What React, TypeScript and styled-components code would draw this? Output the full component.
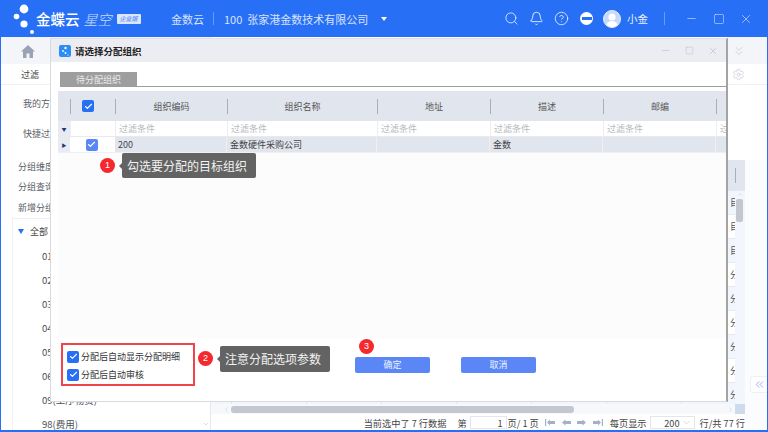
import React from "react";
import styled, { createGlobalStyle } from "styled-components";
import { Search, Bell, CircleHelp, Minus, Square, X, ChevronsDown, Settings, ChevronsLeft, ChevronDown, ChevronUp, ChevronLeft, ChevronRight, Check } from "lucide-react";

const Global = createGlobalStyle`
  html, body { margin: 0; padding: 0; width: 768px; height: 432px; overflow: hidden; background: #fff; }
  * { box-sizing: border-box; }
  body { font-family: "Noto Sans CJK SC", "Noto Sans", sans-serif; }
`;

const Page = styled.div`
  position: relative; width: 768px; height: 432px; overflow: hidden; display: flex; flex-direction: column;
  background: #fff; color: #4a4f57; font-size: 9px;
  border-left: 1px solid #2770f6; border-right: 1px solid #2770f6; border-bottom: 2px solid #2770f6;
`;
const Header = styled.header`
  flex: 0 0 37px; margin: 0 -1px; display: flex; align-items: center; background: #2770f6; color: #fff;
`;
const LogoBox = styled.div`
  flex: 0 0 171px; display: flex; align-items: center; height: 100%;
`;
const LogoMain = styled.span`
  margin-left: 1px; font-size: 14.5px; letter-spacing: 0; font-weight: 500; line-height: 1; margin-top: 1px;
`;
const LogoSub = styled.span`
  margin-left: 4px; font-size: 14px; font-style: italic; font-weight: 300; opacity: .75; line-height: 1; margin-top: 0;
`;
const LogoBadge = styled.span`
  margin-left: 5px; width: 24px; height: 10px; background: #d9e6fd; color: #2770f6; font-size: 6px; line-height: 10px; text-align: center; border-radius: 1px; font-style: italic;
`;
const HeadText = styled.span<{ $w: number }>`
  flex: 0 0 ${p => p.$w}px; font-size: 11px; opacity: .92; white-space: pre; color: #e4edfe;
`;
const HeadDivider = styled.i<{ $ml: number; $mr: number }>`
  flex: 0 0 1px; height: 13px; margin: 0 ${p => p.$mr}px 0 ${p => p.$ml}px; background: rgba(255,255,255,.3);
`;
const Caret = styled.i`
  width: 0; height: 0; margin-left: 13px; border: 3.5px solid transparent; border-top: 4px solid #fff; border-bottom: 0;
`;
const HeadRight = styled.div`
  margin-left: auto; display: flex; align-items: center; color: #eef3fe;
`;
const HeadIcon = styled.span<{ $w: number }>`
  flex: 0 0 ${p => p.$w}px; display: flex; justify-content: center; align-items: center;
`;
const NoEntry = styled.span`
  width: 13px; height: 13px; border-radius: 50%; background: #fff; display: flex; align-items: center; justify-content: center;
  &::after { content: ""; width: 10px; height: 3px; background: #2770f6; }
`;
const Avatar = styled.span`
  width: 18px; height: 18px; border-radius: 50%; background: #c6d8fb; display: block; overflow: hidden; border: 1px solid #e8effe;
`;
const UserName = styled.span`
  margin-left: 3px; width: 37px; font-size: 10.5px; color: #eaf1fe;
`;

const Body = styled.div`
  flex: 1; min-height: 0; display: flex;
`;
const LeftPanel = styled.aside`
  flex: 0 0 210px; display: flex; flex-direction: column; background: #fff; border-right: 1px solid #e6e8ee;
`;
const HomeTab = styled.div`
  flex: none; height: 27px; background: #f4f5f9; display: flex; align-items: center; justify-content: flex-start; padding: 2px 0 0 20px; color: #9aa3b5;
`;
const FilterTab = styled.div`
  flex: none; height: 21px; padding-left: 20px; line-height: 21px; color: #444; font-size: 9px; border-bottom: 1px solid #f0f1f4;
`;
const LeftLabel = styled.div<{ $x: number; $h: number; $mt: number }>`
  flex: none; height: ${p => p.$h}px; margin-top: ${p => p.$mt}px; padding-left: ${p => p.$x}px; line-height: ${p => p.$h}px; white-space: nowrap; color: #5a5f68;
`;
const TreeBox = styled.div`
  flex: 1; min-height: 0; margin: 0 0 0 11px; border-left: 1px solid #f0f1f5; border-top: 1px solid #eceef3; position: relative; overflow: hidden;
`;
const TreeRoot = styled.div`
  height: 25px; padding-left: 18px; line-height: 26px; display: flex; align-items: center; color: #444; gap: 0;
`;
const TriDown = styled.i`
  width: 0; height: 0; margin: 0 6px 0 -13px; border: 3.5px solid transparent; border-top: 5px solid #2770f6; border-bottom: 0;
`;
const TreeItem = styled.div`
  height: 24px; padding-left: 29px; line-height: 24px; white-space: nowrap; color: #4a4f57; font-size: 9.5px;
`;
const TreeArrow = styled.span`
  position: absolute; right: 0; bottom: 2px; color: #c4c8d0; display: flex;
`;

const MainPanel = styled.main`
  flex: 1; min-width: 0; display: flex; flex-direction: column; background: #fbfcfe;
`;
const MainTop = styled.div`
  flex: 0 0 123px; background: #fff;
`;
const GridArea = styled.div`
  flex: 1; min-height: 0; display: flex; overflow: hidden;
`;
const GridBody = styled.div`
  flex: 1; min-width: 0; display: flex; flex-direction: column;
`;
const GridHead = styled.div`
  flex: 0 0 31px; background: #e1e5ee;
`;
const GridRow = styled.div<{ $alt: boolean }>`
  flex: 0 0 24px; display: grid; grid-template-columns: 1fr 5px; align-items: center; color: #555;
  background: ${p => (p.$alt ? "#f1f5fd" : "#fff")}; border-bottom: 1px solid #e6e9f0;
`;
const GridFill = styled.span`
  height: 100%;
  background: repeating-linear-gradient(to right, transparent 0 20px, #e2e5ec 20px 21px, transparent 21px 75px);
`;
const CellClip = styled.span`
  overflow: hidden; white-space: nowrap; font-size: 9px; line-height: 1;
`;
const VScroll = styled.div`
  flex: 0 0 10px; background: #f3f6fc; display: flex; flex-direction: column; align-items: center; color: #c4c8d0;
`;
const HeadCap = styled.div`
  flex: 0 0 31px; width: 100%; background: #e1e5ee; display: flex; align-items: center;
  &::before { content: ""; width: 1px; height: 15px; background: #a9aeb8; }
`;
const VThumb = styled.div`
  width: 7px; height: 23px; margin-top: 1px; margin-right: 2px; background: #c3c7d0; border-radius: 2px;
`;
const BottomBar = styled.div`
  flex: 0 0 10px; display: flex; align-items: center; background: #f6f8fc; color: #c4c8d0; padding-left: 12px;
`;
const HTrack = styled.div`
  flex: 1; height: 7px; margin: 0 1px;
`;
const HThumb = styled.div`
  width: 343px; height: 7px; background: #c3c7d0; border-radius: 3px;
`;
const Corner = styled.div`
  flex: 0 0 10px; height: 10px; background: #ccdcec; margin-left: 1px;
`;
const StatusBar = styled.div`
  flex: 0 0 16px; display: flex; align-items: center; justify-content: flex-end; background: #fff; color: #444; font-size: 9.2px; white-space: pre; padding: 1px 0 0 0;
`;
const StatusCount = styled.span`
  margin-right: 11px;
`;
const PageInput = styled.span`
  width: 37px; height: 13px; border: 1px solid #e3e6ec; text-align: right; padding-right: 3px; line-height: 12px; margin: 0 1px 0 3px; background: #fff;
`;
const NavIcons = styled.span`
  display: flex; gap: 6px; margin: 0 7px 0 6px; color: #a4b0c8;
`;
const NavIcon = styled.svg`
  flex: none;
`;
const SizeSelect = styled.span`
  width: 45px; height: 13px; border: 1px solid #e3e6ec; margin: 0 5px 0 3px; display: flex; align-items: center; justify-content: flex-end; gap: 1px; padding-right: 2px; line-height: 12px;
  svg { flex: none; }
`;
const RightRail = styled.aside`
  flex: 0 0 22px; background: #fbfcfe; display: flex; flex-direction: column;
`;
const RailWhite = styled.div`
  flex: 0 0 123px; background: #fff;
`;
const CollapseBtn = styled.div`
  position: absolute; right: -1px; top: 376px; width: 18px; height: 17px; background: #fff; color: #5a87f5; border-radius: 3px 0 0 3px; display: flex; align-items: center; justify-content: center; border: 1px solid #eef0f5; border-right: 0;
`;
const OuterTools = styled.div`
  position: absolute; left: 726px; top: 37px; width: 41px; height: 48px; display: flex; flex-direction: column; background: #fff; color: #b3bac8; align-items: flex-start; border-bottom: 1px solid #f0f1f4;
`;
const OuterToolTop = styled.div`
  height: 27px; width: 100%; padding-left: 5px; background: #f4f5f9; display: flex; align-items: center;
`;
const OuterToolGear = styled.div`
  height: 20px; padding-left: 5px; display: flex; align-items: center;
`;

const Modal = styled.section`
  position: absolute; left: 49px; top: 38px; width: 678px; height: 364px; background: #fff; display: flex; flex-direction: column;
  border-left: 1px solid #d8dade; border-bottom: 1px solid #d8dade; border-right: 2px solid #a3a3a3; border-top: 1px solid #dfe1e6;
`;
const ModalTitle = styled.div`
  flex: 0 0 23px; background: #ecedf2; display: flex; align-items: center; padding-left: 8px; color: #222; font-size: 9.5px; font-weight: 700;
`;
const TitleLogo = styled.span`
  width: 12px; height: 12px; margin-right: 4px; border-radius: 2px; background: #2b8ef5; display: block;
`;
const ModalControls = styled.div`
  margin-left: auto; display: flex; align-items: center; color: #a9afbb; padding-right: 1px;
`;
const ModalControl = styled.span`
  width: 24px; display: flex; justify-content: center;
`;
const TabStrip = styled.div`
  flex: 0 0 25px; padding: 10px 0 0 9px; display: flex; margin-bottom: 4px;
`;
const TabBar = styled.div`
  flex: 1; border-bottom: 1px solid #9c9c9c; display: flex;
`;
const Tab = styled.div`
  width: 77px; height: 14px; background: #9e9e9e; color: #ececec; font-size: 9px; line-height: 15px; text-align: center;
`;
const Grid = styled.div`
  flex: 0 0 247px; margin-left: 7px; display: flex; flex-direction: column; background: #fcfcfc; overflow: hidden;
`;
const GRID_COLS = "12px 45px 112px 150px 113px 113px 113px 20px";
const HeaderRow = styled.div`
  flex: 0 0 30px; display: grid; grid-template-columns: ${GRID_COLS}; background: #e1e5ee; align-items: center; color: #555; font-size: 9px;
`;
const HeaderCell = styled.div`
  height: 15px; display: flex; align-items: center; justify-content: center; border-left: 1px solid #a9aeb8;
`;
const HeaderCheckCell = styled(HeaderCell)`
  padding-right: 10px;
`;
const FilterRow = styled.div`
  flex: 0 0 16px; display: grid; grid-template-columns: ${GRID_COLS}; background: #fff; color: #b5b8be; font-size: 9px; border-bottom: 1px solid #e8eaf0;
`;
const FilterCell = styled.div`
  padding-left: 3px; line-height: 15px; border-left: 1px solid #eceef3; overflow: hidden; white-space: nowrap;
`;
const RowMark = styled.div<{ $bg: string }>`
  display: flex; align-items: center; justify-content: center; background: ${p => p.$bg}; color: #1c3a78; font-size: 5px;
`;
const DataRow = styled.div`
  flex: 0 0 16px; display: grid; grid-template-columns: ${GRID_COLS}; background: #e1e5ee; color: #444; font-size: 9px; border-bottom: 1px solid #eef0f4;
`;
const DataCell = styled.div`
  padding: 1px 0 0 3px; line-height: 14px; border-right: 1px solid #eef0f4; white-space: nowrap; overflow: hidden;
`;
const CheckCell = styled.div`
  background: #fff; display: flex; align-items: center; justify-content: center; padding-right: 2px;
`;
const CheckBox = styled.span<{ $soft?: boolean }>`
  flex: none; width: 12px; height: 12px; border-radius: 2px; display: flex; align-items: center; justify-content: center; color: #fff;
  background: ${p => (p.$soft ? "#5a87f5" : "#2770f6")};
`;
const ModalFooter = styled.div`
  flex: 1; display: flex; align-items: flex-start; padding: 5px 0 0 10px;
`;
const OptionBox = styled.div`
  width: 134px; height: 43px; border: 2px solid #f0444a; display: flex; flex-direction: column; justify-content: center; gap: 5px; padding: 2px 0 0 4px; color: #333; font-size: 9px;
`;
const Option = styled.label`
  display: flex; align-items: center; gap: 2px; height: 13px; white-space: nowrap;
`;
const ButtonRow = styled.div`
  margin: 14px 0 0 160px; display: flex; gap: 31px;
`;
const Btn = styled.button`
  width: 75px; height: 16px; padding: 0; border: 0; border-radius: 2px; background: #5a87f5; color: #eef3fe; font: 9px "Noto Sans CJK SC", sans-serif; line-height: 16px;
`;
const Badge = styled.span<{ $x: number; $y: number }>`
  position: absolute; left: ${p => p.$x}px; top: ${p => p.$y}px; width: 15px; height: 15px; border-radius: 50%; background: #f5282d; color: #fff; font: 400 9px/15px "Liberation Sans", sans-serif; text-align: center;
`;
const Tip = styled.div<{ $x: number; $y: number; $w: number; $h: number; $fs: number }>`
  position: absolute; left: ${p => p.$x}px; top: ${p => p.$y}px; width: ${p => p.$w}px; height: ${p => p.$h}px; background: #636363; color: #f2f2f2; border-radius: 2px; font-size: ${p => p.$fs}px; line-height: ${p => p.$h}px; padding-left: 5px; white-space: nowrap;
  &::before { content: ""; position: absolute; left: -3px; top: 50%; margin-top: -3px; border: 3px solid transparent; border-left: 0; border-right-color: #636363; }
`;

const rowTexts = ["目","目","目","分","分","分","分","分","分"];
const treeItems = ["01(原材料)","02(半成品)","03(产成品)","04(周转材料)","05(设备)","06(配件)","09(工序物资)","98(费用)"];

const Nav = ({ d }: { d: string }) => (
  <NavIcon width="10" height="9" viewBox="0 0 10 9" fill="currentColor"><path d={d} /></NavIcon>
);

export default function App() {
  return (
    <Page>
      <Global />
      <Header>
        <LogoBox>
          <svg width="35" height="37" viewBox="0 0 35 37" fill="#fff" style={{ flex: "none" }}>
            <circle cx="24" cy="9" r="4.4" /><circle cx="16.5" cy="16.5" r="2.8" /><circle cx="24" cy="24" r="3.6" /><circle cx="32" cy="32" r="2" />
          </svg>
          <LogoMain>金蝶云</LogoMain>
          <LogoSub>星空</LogoSub>
          <LogoBadge>企业版</LogoBadge>
        </LogoBox>
        <HeadText $w={33}>金数云</HeadText>
        <HeadDivider $ml={9} $mr={10} />
        <HeadText $w={144}>100  张家港金数技术有限公司</HeadText>
        <Caret />
        <HeadRight>
          <HeadIcon $w={25}><Search size={15} strokeWidth={1.3} /></HeadIcon>
          <HeadIcon $w={25}><Bell size={15} strokeWidth={1.4} /></HeadIcon>
          <HeadIcon $w={25}><CircleHelp size={15} strokeWidth={1.3} /></HeadIcon>
          <HeadIcon $w={25}><NoEntry /></HeadIcon>
          <HeadIcon $w={25}>
            <Avatar>
              <svg width="16" height="16" viewBox="0 0 16 16" fill="#fff"><circle cx="8" cy="6" r="3.6" /><ellipse cx="8" cy="14.5" rx="5.5" ry="4.5" /></svg>
            </Avatar>
          </HeadIcon>
          <UserName>小金</UserName>
          <HeadDivider $ml={0} $mr={13} />
          <HeadIcon $w={27}><Minus size={13} strokeWidth={1} /></HeadIcon>
          <HeadIcon $w={27}><Square size={12} strokeWidth={1} /></HeadIcon>
          <HeadIcon $w={27}><X size={14} strokeWidth={1} /></HeadIcon>
          <HeadIcon $w={9} />
        </HeadRight>
      </Header>
      <Body>
        <LeftPanel>
          <HomeTab>
            <svg width="14" height="13" viewBox="0 0 14 13" fill="currentColor"><path d="M7 0 L14 6.5 H12 V13 H8.5 V8.5 H5.5 V13 H2 V6.5 H0 Z" /></svg>
          </HomeTab>
          <FilterTab>过滤</FilterTab>
          <LeftLabel $x={22} $h={30} $mt={4}>我的方案</LeftLabel>
          <LeftLabel $x={22} $h={30} $mt={0}>快捷过滤</LeftLabel>
          <LeftLabel $x={17} $h={20} $mt={8}>分组维度</LeftLabel>
          <LeftLabel $x={17} $h={20} $mt={0}>分组查询</LeftLabel>
          <LeftLabel $x={17} $h={20} $mt={1}>新增分组</LeftLabel>
          <TreeBox>
            <TreeRoot><TriDown />全部</TreeRoot>
            {treeItems.map(t => <TreeItem key={t}>{t}</TreeItem>)}
            <TreeArrow><ChevronDown size={8} /></TreeArrow>
          </TreeBox>
        </LeftPanel>
        <MainPanel>
          <MainTop />
          <GridArea>
            <GridBody>
              <GridHead />
              {rowTexts.map((t, i) => (
                <GridRow key={i} $alt={i % 2 === 0}>
                  <GridFill />
                  <CellClip>{t}</CellClip>
                </GridRow>
              ))}
            </GridBody>
            <VScroll>
              <HeadCap />
              <ChevronUp size={7} />
              <VThumb />
            </VScroll>
          </GridArea>
          <BottomBar>
            <ChevronLeft size={7} />
            <HTrack><HThumb /></HTrack>
            <ChevronRight size={7} />
            <Corner />
          </BottomBar>
          <StatusBar>
            <StatusCount>当前选中了 7 行数据</StatusCount>
            第<PageInput>1</PageInput>页/ 1 页
            <NavIcons>
              <Nav d="M0 1h1.2v7H0zM2 4.5 5 1.5V3H10V6H5V7.5Z" />
              <Nav d="M1 4.5 4.5 1.5V3H10V6H4.5V7.5Z" />
              <Nav d="M9 4.5 5.5 1.5V3H0V6H5.5V7.5Z" />
              <Nav d="M8.8 1H10v7H8.8zM8 4.5 5 1.5V3H0V6H5V7.5Z" />
            </NavIcons>
            每页显示
            <SizeSelect>200<ChevronDown size={11} color="#aeb2bb" strokeWidth={1} /></SizeSelect>
            行/共 77 行
          </StatusBar>
        </MainPanel>
        <RightRail>
          <RailWhite />
        </RightRail>
      </Body>

      <OuterTools>
        <OuterToolTop><ChevronsDown size={14} strokeWidth={1} /></OuterToolTop>
        <OuterToolGear><Settings size={13} strokeWidth={1} /></OuterToolGear>
      </OuterTools>
      <CollapseBtn><ChevronsLeft size={13} strokeWidth={1.2} /></CollapseBtn>

      <Modal>
        <ModalTitle>
          <TitleLogo>
            <svg width="12" height="12" viewBox="0 0 12 12" fill="#fff"><circle cx="6.5" cy="3" r="1.2" /><circle cx="4" cy="6" r=".9" /><circle cx="6.5" cy="8" r="1" /><circle cx="9" cy="10" r=".6" /></svg>
          </TitleLogo>
          请选择分配组织
          <ModalControls>
            <ModalControl><Minus size={11} strokeWidth={1} /></ModalControl>
            <ModalControl><Square size={9} strokeWidth={1} /></ModalControl>
            <ModalControl><X size={12} strokeWidth={1} /></ModalControl>
          </ModalControls>
        </ModalTitle>
        <TabStrip>
          <TabBar><Tab>待分配组织</Tab></TabBar>
        </TabStrip>
        <Grid>
          <HeaderRow>
            <span />
            <HeaderCheckCell><CheckBox><Check size={9} strokeWidth={3} /></CheckBox></HeaderCheckCell>
            <HeaderCell>组织编码</HeaderCell>
            <HeaderCell>组织名称</HeaderCell>
            <HeaderCell>地址</HeaderCell>
            <HeaderCell>描述</HeaderCell>
            <HeaderCell>邮编</HeaderCell>
            <HeaderCell />
          </HeaderRow>
          <FilterRow>
            <RowMark $bg="#e8ebf2">▼</RowMark>
            <FilterCell />
            <FilterCell>过滤条件</FilterCell>
            <FilterCell>过滤条件</FilterCell>
            <FilterCell>过滤条件</FilterCell>
            <FilterCell>过滤条件</FilterCell>
            <FilterCell>过滤条件</FilterCell>
            <FilterCell>过滤条件</FilterCell>
          </FilterRow>
          <DataRow>
            <RowMark $bg="#e8ebf2">▶</RowMark>
            <CheckCell><CheckBox $soft><Check size={9} strokeWidth={3} /></CheckBox></CheckCell>
            <DataCell>200</DataCell>
            <DataCell>金数硬件采购公司</DataCell>
            <DataCell />
            <DataCell>金数</DataCell>
            <DataCell />
            <DataCell />
          </DataRow>
        </Grid>
        <ModalFooter>
          <OptionBox>
            <Option><CheckBox><Check size={9} strokeWidth={3} /></CheckBox>分配后自动显示分配明细</Option>
            <Option><CheckBox><Check size={9} strokeWidth={3} /></CheckBox>分配后自动审核</Option>
          </OptionBox>
          <ButtonRow>
            <Btn>确定</Btn>
            <Btn>取消</Btn>
          </ButtonRow>
        </ModalFooter>
      </Modal>

      <Badge $x={99} $y={158}>1</Badge>
      <Tip $x={121} $y={153} $w={134} $h={25} $fs={12}>勾选要分配的目标组织</Tip>
      <Badge $x={197} $y={351}>2</Badge>
      <Tip $x={219} $y={346} $w={110} $h={26} $fs={12}>注意分配选项参数</Tip>
      <Badge $x={358} $y={339}>3</Badge>
    </Page>
  );
}
